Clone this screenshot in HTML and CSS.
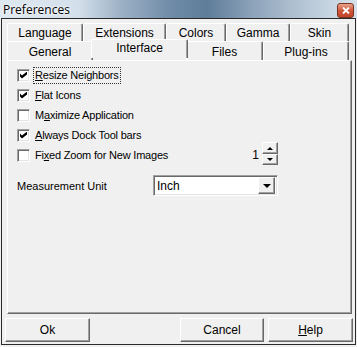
FILE: index.html
```html
<!DOCTYPE html>
<html>
<head>
    <title>Preferences</title>
    <link rel="stylesheet" href="styles.css">
</head>
<body>
    <div class="window">
        <div class="titlebar">
            <span class="title">Preferences</span>
            <span class="close">
                <svg width="8" height="7" viewBox="0 0 8 7"><path d="M1 0.5 L7 6.5 M7 0.5 L1 6.5" stroke="#fff" stroke-width="1.8"/></svg>
            </span>
        </div>
        <div class="dialog">
            <div class="tabs">
                <div class="tab-row">
                    <div class="tab w-language">Language</div>
                    <div class="tab w-extensions">Extensions</div>
                    <div class="tab w-colors">Colors</div>
                    <div class="tab w-gamma">Gamma</div>
                    <div class="tab w-skin">Skin</div>
                </div>
                <div class="tab-row front">
                    <div class="tab w-general">General</div>
                    <div class="tab w-interface active">Interface</div>
                    <div class="tab w-files">Files</div>
                    <div class="tab w-plugins">Plug-ins</div>
                </div>
            </div>
            <div class="panel">
                <div class="options">
                    <div class="option">
                        <span class="check on"></span>
                        <span class="label focus"><u>R</u>esize Neighbors</span>
                    </div>
                    <div class="option">
                        <span class="check on"></span>
                        <span class="label"><u>F</u>lat Icons</span>
                    </div>
                    <div class="option">
                        <span class="check"></span>
                        <span class="label">M<u>a</u>ximize Application</span>
                    </div>
                    <div class="option">
                        <span class="check on"></span>
                        <span class="label"><u>A</u>lways Dock Tool bars</span>
                    </div>
                    <div class="option">
                        <span class="check"></span>
                        <span class="label">Fi<u>x</u>ed Zoom for New Images</span>
                        <span class="spin-value">1</span>
                        <div class="spinner">
                            <div class="spin-btn"><span class="arrow up"></span></div>
                            <div class="spin-btn"><span class="arrow down"></span></div>
                        </div>
                    </div>
                    <div class="unit-row">
                        <span>Measurement Unit</span>
                        <div class="select">
                            <span class="select-text">Inch</span>
                            <div class="drop"><span class="arrow down"></span></div>
                        </div>
                    </div>
                </div>
            </div>
            <div class="buttons">
                <div class="btn w-ok">Ok</div>
                <div class="btn w-cancel">Cancel</div>
                <div class="btn w-help"><u>H</u>elp</div>
            </div>
        </div>
    </div>
</body>
</html>
```

FILE: styles.css
```css
body {
    margin: 0;
    background: #f0f0f0;
    font-family: "Liberation Sans", Arial, sans-serif;
    font-size: 11px;
    color: #000;
}

.window {
    width: 357px;
    height: 347px;
    overflow: hidden;
    background: #f0f0f0;
}

/* title bar */
.titlebar {
    height: 18px;
    display: flex;
    align-items: center;
    padding: 0 3px 0 3px;
    background: linear-gradient(90deg, #dfe9f2 0, #d3dfea 22%, #9db1c5 34%, #6f8ba7 48%, #5f7c99 58%, #8aa1b8 70%, #aebfd0 82%, #c6d4e1 92%, #d5e0ea 100%);
}

.title {
    font-family: "Open Sans", "Noto Sans", sans-serif;
    font-size: 12px;
    color: #000;
    text-shadow: 0 0 4px #fff, 0 0 2px #fff;
}

.close {
    margin-left: auto;
    width: 15px;
    height: 13px;
    margin-top: 3px;
    display: flex;
    align-items: center;
    justify-content: center;
    border: 1px solid #7a3322;
    border-radius: 3px;
    background: linear-gradient(#e9a38b, #d0573a 50%, #c1442a);
}

/* dialog */
.dialog {
    margin-left: 1px;
    width: 355px;
    height: 327px;
    box-sizing: border-box;
    border: 1px solid #2a2a2a;
    background: #f0f0f0;
}

.tabs {
    margin: 4px 0 0 5px;
}

.tab-row {
    display: flex;
    height: 18px;
}

.tab-row.front {
    height: 19px;
}

.tab {
    box-sizing: border-box;
    height: 18px;
    display: flex;
    align-items: center;
    justify-content: center;
    border-top: 1px solid #fff;
    border-left: 1px solid #fff;
    border-right: 1px solid #696969;
    box-shadow: inset -1px 0 #a0a0a0;
    border-radius: 2px 2px 0 0;
    font-size: 12px;
    padding-top: 1px;
    background: #f0f0f0;
}

.tab-row.front .tab {
    height: 19px;
}

.tab.active {
    position: relative;
    z-index: 1;
    height: 22px;
    margin: -2px -2px 0 -2px;
    padding-bottom: 4px;
}

.w-language { width: 76px; }
.w-extensions { width: 83px; }
.w-colors { width: 60px; }
.w-gamma { width: 64px; }
.w-skin { width: 59px; }
.w-general { width: 86px; }
.w-interface { width: 97px; }
.w-files { width: 77px; }
.w-plugins { width: 86px; }

.panel {
    margin-left: 5px;
    width: 345px;
    height: 254px;
    box-sizing: border-box;
    border: 1px solid;
    border-color: #fff #696969 #696969 #fff;
    box-shadow: inset -1px -1px #a0a0a0;
    padding: 4px 0 0 9px;
}

.options {
    width: 261px;
}

.option {
    display: flex;
    align-items: center;
    height: 20px;
}

.check {
    width: 13px;
    height: 13px;
    box-sizing: border-box;
    border: 1px solid;
    border-color: #a0a0a0 #fff #fff #a0a0a0;
    box-shadow: inset 1px 1px #696969, inset -1px -1px #e3e3e3;
    background: #fff;
    margin-right: 3px;
    position: relative;
}

.check.on::after {
    content: "";
    position: absolute;
    left: 2px;
    top: 2px;
    width: 7px;
    height: 7px;
    background: #000;
    clip-path: polygon(0 28%, 28% 57%, 100% 0, 100% 43%, 28% 100%, 0 71%);
}

.label {
    padding: 1px 1px;
    border: 1px dotted transparent;
    line-height: 13px;
    letter-spacing: -0.2px;
}

.label.focus {
    border-color: #333;
}

.spin-value {
    margin-left: auto;
    margin-right: 3px;
    font-size: 12px;
}

.spinner {
    width: 16px;
    display: flex;
    flex-direction: column;
    margin-top: -3px;
}

.spin-btn {
    height: 12px;
    box-sizing: border-box;
    display: flex;
    align-items: center;
    justify-content: center;
    border: 1px solid;
    border-color: #fff #696969 #696969 #fff;
    box-shadow: inset -1px -1px #a0a0a0;
    background: #f0f0f0;
}

.spin-btn + .spin-btn {
    height: 11px;
}

.arrow {
    width: 0;
    height: 0;
    border-left: 3px solid transparent;
    border-right: 3px solid transparent;
}

.arrow.up {
    border-bottom: 3px solid #000;
}

.arrow.down {
    border-top: 3px solid #000;
}

.unit-row {
    display: flex;
    align-items: center;
    justify-content: space-between;
    margin-top: 10px;
    height: 21px;
}

.select {
    width: 125px;
    height: 21px;
    box-sizing: border-box;
    display: flex;
    align-items: center;
    border: 1px solid;
    border-color: #a0a0a0 #fff #fff #a0a0a0;
    box-shadow: inset 1px 1px #696969, inset -1px -1px #e3e3e3;
    background: #fff;
    padding: 2px;
}

.select-text {
    flex: 1;
    padding-left: 1px;
    font-size: 12px;
}

.drop {
    width: 17px;
    height: 17px;
    box-sizing: border-box;
    display: flex;
    align-items: center;
    justify-content: center;
    border: 1px solid;
    border-color: #fff #696969 #696969 #fff;
    box-shadow: inset -1px -1px #a0a0a0;
    background: #f0f0f0;
}

.drop .arrow {
    border-left-width: 4px;
    border-right-width: 4px;
    border-top-width: 4px;
}

/* bottom buttons */
.buttons {
    display: flex;
    margin: 4px 0 0 3px;
    width: 348px;
}

.btn {
    height: 24px;
    box-sizing: border-box;
    display: flex;
    align-items: center;
    justify-content: center;
    border: 1px solid;
    border-color: #fff #696969 #696969 #fff;
    box-shadow: inset -1px -1px #a0a0a0;
    font-size: 12px;
}

.w-ok { width: 85px; margin-right: auto; }
.w-cancel { width: 84px; margin-right: 4px; }
.w-help { width: 85px; }
```
